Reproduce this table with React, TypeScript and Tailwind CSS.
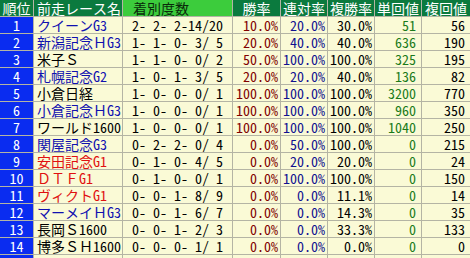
import React from "react";

type Row = {
  name: string;
  tone: "blue" | "red" | "black";
  record: string;
  win: string;
  place: string;
  show: string;
  tan: string;
  fuku: string;
};

const ROWS: Row[] = [
  { name: "クイーンG3", tone: "blue", record: "2- 2- 2-14/20", win: "10.0%", place: "20.0%", show: "30.0%", tan: "51", fuku: "56" },
  { name: "新潟記念ＨG3", tone: "blue", record: "1- 1- 0- 3/ 5", win: "20.0%", place: "40.0%", show: "40.0%", tan: "636", fuku: "190" },
  { name: "米子Ｓ", tone: "black", record: "1- 1- 0- 0/ 2", win: "50.0%", place: "100.0%", show: "100.0%", tan: "325", fuku: "195" },
  { name: "札幌記念G2", tone: "blue", record: "1- 0- 1- 3/ 5", win: "20.0%", place: "20.0%", show: "40.0%", tan: "136", fuku: "82" },
  { name: "小倉日経", tone: "black", record: "1- 0- 0- 0/ 1", win: "100.0%", place: "100.0%", show: "100.0%", tan: "3200", fuku: "770" },
  { name: "小倉記念ＨG3", tone: "blue", record: "1- 0- 0- 0/ 1", win: "100.0%", place: "100.0%", show: "100.0%", tan: "960", fuku: "350" },
  { name: "ワールド1600", tone: "black", record: "1- 0- 0- 0/ 1", win: "100.0%", place: "100.0%", show: "100.0%", tan: "1040", fuku: "250" },
  { name: "関屋記念G3", tone: "blue", record: "0- 2- 2- 0/ 4", win: "0.0%", place: "50.0%", show: "100.0%", tan: "0", fuku: "215" },
  { name: "安田記念G1", tone: "red", record: "0- 1- 0- 4/ 5", win: "0.0%", place: "20.0%", show: "20.0%", tan: "0", fuku: "24" },
  { name: "ＤＴＦG1", tone: "red", record: "0- 1- 0- 0/ 1", win: "0.0%", place: "100.0%", show: "100.0%", tan: "0", fuku: "150" },
  { name: "ヴィクトG1", tone: "red", record: "0- 0- 1- 8/ 9", win: "0.0%", place: "0.0%", show: "11.1%", tan: "0", fuku: "14" },
  { name: "マーメイＨG3", tone: "blue", record: "0- 0- 1- 6/ 7", win: "0.0%", place: "0.0%", show: "14.3%", tan: "0", fuku: "35" },
  { name: "長岡Ｓ1600", tone: "black", record: "0- 0- 1- 2/ 3", win: "0.0%", place: "0.0%", show: "33.3%", tan: "0", fuku: "133" },
  { name: "博多ＳＨ1600", tone: "black", record: "0- 0- 0- 1/ 1", win: "0.0%", place: "0.0%", show: "0.0%", tan: "0", fuku: "0" },
];

const TONE: Record<Row["tone"], string> = {
  blue: "text-[#1010b0]",
  red: "text-[#e01010]",
  black: "text-black",
};

const FONT = {
  fontFamily: "'Noto Sans Mono CJK JP', 'Noto Sans CJK JP', 'Liberation Mono', monospace",
};

export default function App() {
  const cell = "bg-[#fafad6] h-4 leading-4 whitespace-pre overflow-hidden";

  return (
    <div className="w-[470px] h-[258px] overflow-hidden bg-[#b4b4a4]" style={FONT}>
      <div className="grid grid-cols-[33px_88px_109px_47px_46px_46px_46px_48px] gap-px text-[14px]">
        {/* Header */}
        <div className="bg-[#0b7a3e] text-white h-4 leading-4 text-center">順位</div>
        <div className="bg-[#0b7a3e] text-white h-4 leading-4 pl-[3px]">前走レース名</div>
        <div className="bg-[#3ccc3c] text-[#0a2a0a] h-4 leading-4 pl-[10px]">着別度数</div>
        <div className="bg-[#0b7a3e] text-white h-4 leading-4 text-center">勝率</div>
        <div className="bg-[#0b7a3e] text-white h-4 leading-4 text-center">連対率</div>
        <div className="bg-[#0b7a3e] text-white h-4 leading-4 text-center">複勝率</div>
        <div className="bg-[#0b7a3e] text-white h-4 leading-4 text-center">単回値</div>
        <div className="bg-[#0b7a3e] text-white h-4 leading-4 text-center">複回値</div>

        {ROWS.map((r, i) => (
          <React.Fragment key={i}>
            <div className="bg-[#0a2cf0] text-white h-4 leading-4 text-center">{i + 1}</div>
            <div className={`${cell} pl-[3px] ${TONE[r.tone]}`}>{r.name}</div>
            <div className={`${cell} text-center text-black`}>{r.record}</div>
            <div className={`${cell} text-right pr-[2px] text-[#800000]`}>{r.win}</div>
            <div className={`${cell} text-right pr-[2px] text-[#101090]`}>{r.place}</div>
            <div className={`${cell} text-right pr-[2px] text-black`}>{r.show}</div>
            <div className={`${cell} text-right pr-[5px] text-[#1a7a1a]`}>{r.tan}</div>
            <div className={`${cell} text-right pr-[5px] text-black`}>{r.fuku}</div>
          </React.Fragment>
        ))}

        {/* partial row below the cut */}
        <div className="bg-[#0a2cf0] h-4" />
        <div className={cell} />
        <div className={cell} />
        <div className={cell} />
        <div className={cell} />
        <div className={cell} />
        <div className={cell} />
        <div className={cell} />
      </div>
    </div>
  );
}
